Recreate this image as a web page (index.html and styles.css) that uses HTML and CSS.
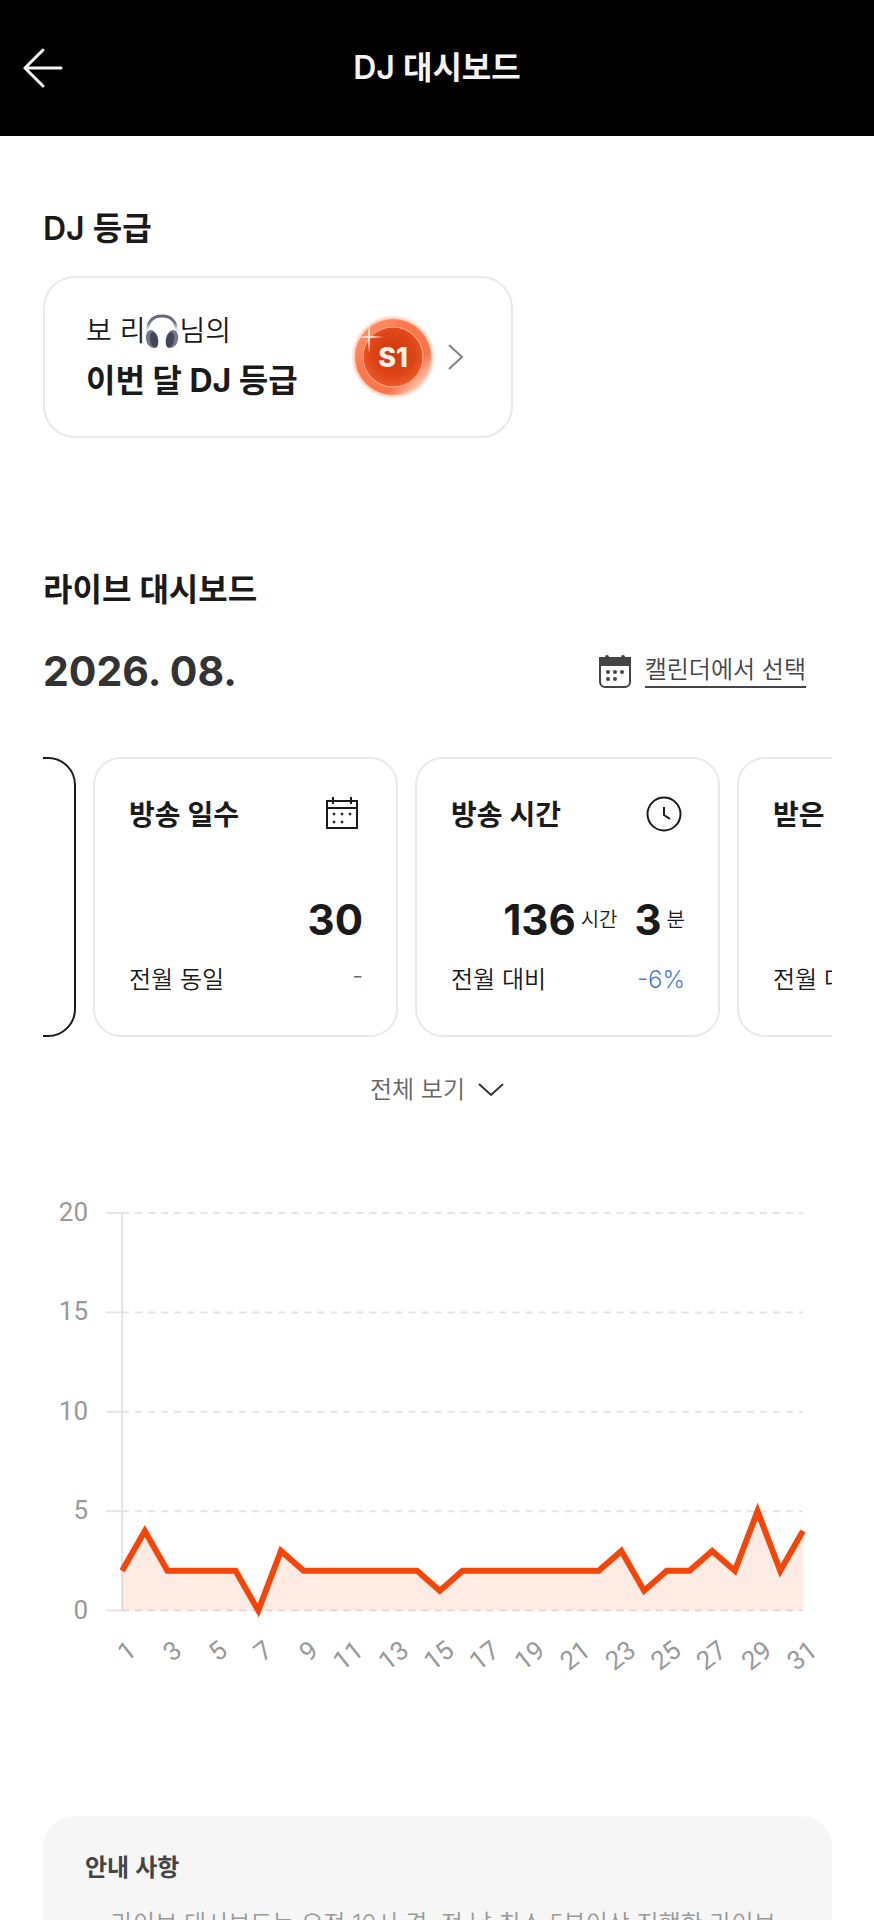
FILE: index.html
```html
<!DOCTYPE html>
<html lang="ko">
<head>
  <meta charset="UTF-8" />
  <meta name="viewport" content="width=device-width, initial-scale=1.0" />
  <title>DJ 대시보드</title>
  <link rel="stylesheet" href="styles.css">
</head>
<body>
  <header class="topbar">
    <button class="back" type="button" aria-label="뒤로">
      <svg width="42" height="44" viewBox="0 0 42 44"><path d="M21 4 3 22l18 18M3 22h36" /></svg>
    </button>
    <h1>DJ 대시보드</h1>
  </header>

  <main>
    <section class="grade">
      <h2>DJ 등급</h2>
      <a class="grade-card" href="#grade">
        <span class="grade-text">
          <span class="grade-name">보 리<svg class="headphone" width="34" height="34" viewBox="0 0 34 34">
            <defs>
              <linearGradient id="band" x1="0" y1="0" x2="0" y2="1">
                <stop offset="0" stop-color="#66667a" />
                <stop offset="0.4" stop-color="#77788a" />
                <stop offset="0.7" stop-color="#e4e4ea" />
              </linearGradient>
            </defs>
            <path d="M3 20C1 9 7 2 17 2s16 7 14 18" fill="none" stroke="url(#band)" stroke-width="3" />
            <ellipse cx="7" cy="25" rx="6" ry="9" fill="#77778c" transform="rotate(-12 7 25)" />
            <ellipse cx="9" cy="26" rx="4" ry="8" fill="#45455a" transform="rotate(-12 9 26)" />
            <ellipse cx="27" cy="25" rx="6" ry="9" fill="#77778c" transform="rotate(12 27 25)" />
            <ellipse cx="25" cy="26" rx="4" ry="8" fill="#45455a" transform="rotate(12 25 26)" />
          </svg>님의</span>
          <strong>이번 달 DJ 등급</strong>
        </span>
        <svg class="badge" width="84" height="84" viewBox="0 0 84 84">
          <defs>
            <linearGradient id="ring" x1="0" y1="0" x2="1" y2="1">
              <stop offset="0" stop-color="#ff9c78" />
              <stop offset="0.35" stop-color="#fb7a50" />
              <stop offset="0.7" stop-color="#fb7448" />
              <stop offset="0.85" stop-color="#ffc0a6" />
              <stop offset="1" stop-color="#f9643a" />
            </linearGradient>
            <radialGradient id="coin" cx="0.5" cy="0.45" r="0.6">
              <stop offset="0" stop-color="#cf3a10" />
              <stop offset="0.6" stop-color="#dd4517" />
              <stop offset="1" stop-color="#f2602f" />
            </radialGradient>
            <radialGradient id="glow">
              <stop offset="0.88" stop-color="#ffb79c" />
              <stop offset="1" stop-color="#ffb79c" stop-opacity="0" />
            </radialGradient>
          </defs>
          <circle cx="42" cy="42" r="42" fill="url(#glow)" />
          <circle cx="42" cy="42" r="38" fill="url(#ring)" />
          <circle cx="42" cy="42" r="30" fill="url(#coin)" stroke="#ffb08c" />
          <path d="M18 5l1 16 14 1-14 1-1 16-1-16-14-1 14-1z" fill="#ffe9df" />
          <text x="42" y="52">S1</text>
        </svg>
        <svg class="chevron" width="18" height="28" viewBox="0 0 18 28"><path d="M2 2l13 12L2 26" /></svg>
      </a>
    </section>

    <section class="live">
      <h2>라이브 대시보드</h2>
      <div class="month">
        <strong>2026. 08.</strong>
        <button class="pick" type="button">
          <svg width="32" height="34" viewBox="0 0 32 34">
            <rect x="1" y="4" width="30" height="29" rx="5" fill="none" stroke="#444" stroke-width="2" />
            <path d="M0 3h32v9H0zM6 3a2 2 0 0 1 4 0zM22 3a2 2 0 0 1 4 0z" fill="#444" />
            <g fill="#444">
              <circle cx="9" cy="18" r="2" /><circle cx="16" cy="18" r="2" /><circle cx="23" cy="18" r="2" />
              <circle cx="9" cy="25" r="2" /><circle cx="16" cy="25" r="2" />
            </g>
          </svg>
          <span>캘린더에서 선택</span>
        </button>
      </div>

      <div class="cards">
        <article class="card selected"></article>
        <article class="card">
          <div class="card-head">
            <h3>방송 일수</h3>
            <svg width="36" height="36" viewBox="0 0 36 36">
              <path d="M3 4h30v27H3zM3 11h30M9 0v7M27 0v7" />
              <g class="dots">
                <circle cx="10" cy="17" r="1" /><circle cx="18" cy="17" r="1" /><circle cx="26" cy="17" r="1" />
                <circle cx="10" cy="25" r="1" /><circle cx="18" cy="25" r="1" />
              </g>
            </svg>
          </div>
          <p class="value"><b>30</b></p>
          <p class="compare">전월 동일 <span class="same">-</span></p>
        </article>
        <article class="card">
          <div class="card-head">
            <h3>방송 시간</h3>
            <svg width="36" height="36" viewBox="0 0 36 36">
              <circle cx="18" cy="17" r="16.5" />
              <path d="M18 10v8l6 4" />
            </svg>
          </div>
          <p class="value"><b>136</b><small>시간</small><b class="minute">3</b><small>분</small></p>
          <p class="compare">전월 대비 <span class="down">-6%</span></p>
        </article>
        <article class="card">
          <div class="card-head"><h3>받은 스푼</h3></div>
          <p class="value"><b></b></p>
          <p class="compare">전월 대비</p>
        </article>
      </div>

      <button class="more" type="button">
        전체 보기
        <svg width="28" height="16" viewBox="0 0 28 16"><path d="M2 2l12 11L26 2" /></svg>
      </button>

      <svg class="chart" viewBox="0 0 788 500" role="img" aria-label="일별 방송 시간">
        <g id="grid"></g>
        <path id="area" />
        <path id="line" />
        <g id="labels"></g>
      </svg>
    </section>

    <section class="notice">
      <h4>안내 사항</h4>
      <ul>
        <li>라이브 대시보드는 오전 10시 경, 전 날 최소 5분이상 진행한 라이브 데이터를 기준으로 업데이트 됩니다.</li>
      </ul>
    </section>
  </main>

  <script src="chart.js"></script>
</body>
</html>
```
FILE: styles.css
```css
* {
  box-sizing: border-box;
}

html {
  overflow: hidden;
}

body {
  margin: 0;
  background: #fff;
  color: #1a1a1a;
  font-family: Inter, "Noto Sans CJK KR", sans-serif;
}

h1, h2, h3, h4, p, ul {
  margin: 0;
  padding: 0;
}

button {
  border: none;
  background: none;
  padding: 0;
  font-family: inherit;
  cursor: pointer;
}

svg {
  display: block;
  flex-shrink: 0;
}

.topbar {
  display: grid;
  grid-template-columns: 64px 1fr 64px;
  align-items: center;
  height: 136px;
  background: #000;
  color: #f4f4f4;
}

.topbar h1 {
  text-align: center;
  font-size: 32px;
  line-height: 48px;
  font-weight: 600;
}

.back {
  padding-left: 22px;
}

.back path {
  fill: none;
  stroke: #f4f4f4;
  stroke-width: 3;
  stroke-linecap: round;
}

main {
  padding: 69px 42px 0 43px;
}

h2 {
  font-size: 32px;
  line-height: 48px;
  font-weight: 600;
}

.grade-card {
  display: flex;
  align-items: center;
  width: 470px;
  height: 162px;
  margin-top: 23px;
  padding: 0 46px 0 41px;
  border: 2px solid #e8e8e8;
  border-radius: 32px;
  color: inherit;
  text-decoration: none;
}

.grade-text {
  flex: 1;
  padding-top: 4px;
}

.grade-name {
  display: flex;
  align-items: center;
  font-size: 28px;
  line-height: 44px;
  font-weight: 350;
}

.grade-text strong {
  display: block;
  font-size: 32px;
  line-height: 56px;
  font-weight: 700;
}

.badge text {
  fill: #fff0e8;
  font-size: 27px;
  font-weight: 800;
  text-anchor: middle;
}

.chevron {
  margin-left: 12px;
}

.chevron path {
  fill: none;
  stroke: #808080;
  stroke-width: 2;
}

.live {
  padding-top: 128px;
}

.month {
  display: flex;
  align-items: center;
  justify-content: space-between;
  margin-top: 31px;
  padding-right: 26px;
  height: 52px;
}

.month strong {
  color: #333;
  font-size: 41px;
  line-height: 52px;
  font-weight: 700;
}

.pick {
  display: flex;
  align-items: center;
  gap: 14px;
  color: #444;
  font-size: 24px;
  font-weight: 350;
  line-height: 32px;
}

.pick span {
  border-bottom: 2px solid #444;
}

.cards {
  display: flex;
  gap: 17px;
  margin-top: 60px;
  overflow: hidden;
}

.card {
  flex: 0 0 305px;
  height: 280px;
  padding: 32px 33px 32px 34px;
  border: 2px solid #e8e8e8;
  border-radius: 28px;
}

.card.selected {
  margin-left: -272px;
  border-color: #1a1a1a;
}

.card-head {
  display: flex;
  align-items: center;
  justify-content: space-between;
  height: 48px;
  padding-right: 3px;
}

.card-head h3 {
  font-size: 28px;
  line-height: 48px;
  font-weight: 600;
  white-space: nowrap;
}

.card-head svg {
  fill: none;
  stroke: #1a1a1a;
  stroke-width: 2;
  overflow: visible;
}

.card-head .dots {
  fill: #1a1a1a;
  stroke-width: 1;
}

.value {
  display: flex;
  align-items: center;
  justify-content: flex-end;
  height: 56px;
  margin-top: 53px;
}

.value b {
  font-size: 42px;
  line-height: 56px;
  font-weight: 700;
}

.value small {
  margin-left: 5px;
  font-size: 20px;
  line-height: 56px;
  font-weight: 350;
}

.value .minute {
  margin-left: 17px;
}

.compare {
  display: flex;
  justify-content: space-between;
  margin-top: 12px;
  font-size: 24px;
  line-height: 40px;
  font-weight: 350;
  white-space: nowrap;
}

.same {
  color: #666;
  line-height: 32px;
}

.down {
  color: #4a7bd0;
}

.more {
  display: flex;
  align-items: center;
  gap: 12px;
  margin: 33px auto 0;
  color: #666;
  font-size: 24px;
  font-weight: 350;
  line-height: 40px;
}

.more path {
  fill: none;
  stroke: #333;
  stroke-width: 2;
}

.chart {
  width: 100%;
  height: auto;
  margin-top: 85px;
  overflow: visible;
}

.chart text {
  fill: #999;
  font-family: Roboto, sans-serif;
  font-size: 26px;
  text-anchor: end;
}

.chart .axis {
  stroke: #e4e4e4;
  stroke-width: 2;
}

.chart .dash {
  stroke: #e4e4e4;
  stroke-width: 2;
  stroke-dasharray: 7 6;
}

#area {
  fill: #f5460a;
  fill-opacity: 0.11;
}

#line {
  fill: none;
  stroke: #f5460a;
  stroke-width: 6;
}

.notice {
  margin-top: 120px;
  padding: 32px 42px;
  border-radius: 32px;
  background: #f6f6f6;
}

.notice h4 {
  color: #444;
  font-size: 24px;
  line-height: 40px;
  font-weight: 600;
}

.notice ul {
  margin-top: 16px;
  padding-left: 26px;
  color: #999;
  font-size: 24px;
  line-height: 40px;
  font-weight: 350;
  list-style: none;
}
```
FILE: chart.js
```js
const hours = [2, 4, 2, 2, 2, 2, 0, 3, 2, 2, 2, 2, 2, 2, 1, 2, 2, 2, 2, 2, 2, 2, 3, 1, 2, 2, 3, 2, 5, 2, 4];

const left = 79;
const right = 759;
const top0 = 18;
const bottom = 415;
const max = 20;

const x = i => left + (right - left) * i / (hours.length - 1);
const y = v => bottom - (bottom - top0) * v / max;

let grid = '';
for (let v = 0; v <= max; v += 5) {
  grid += `<path class="axis" d="M${left - 16} ${y(v)}H${left}" />`;
  grid += `<path class="dash" d="M${left} ${y(v)}H${right}" />`;
  grid += `<text x="45" y="${y(v) + 8}">${v}</text>`;
}
grid += `<path class="axis" d="M${left} ${top0}V${bottom}" />`;
document.getElementById('grid').innerHTML = grid;

const points = hours.map((v, i) => `${x(i)} ${y(v)}`).join('L');
document.getElementById('line').setAttribute('d', `M${points}`);
document.getElementById('area').setAttribute('d', `M${left} ${bottom}L${points}L${right} ${bottom}Z`);

let labels = '';
for (let i = 0; i < hours.length; i += 2) {
  labels += `<text transform="translate(${x(i) + 16} 458) rotate(-38)">${i + 1}</text>`;
}
document.getElementById('labels').innerHTML = labels;
```
